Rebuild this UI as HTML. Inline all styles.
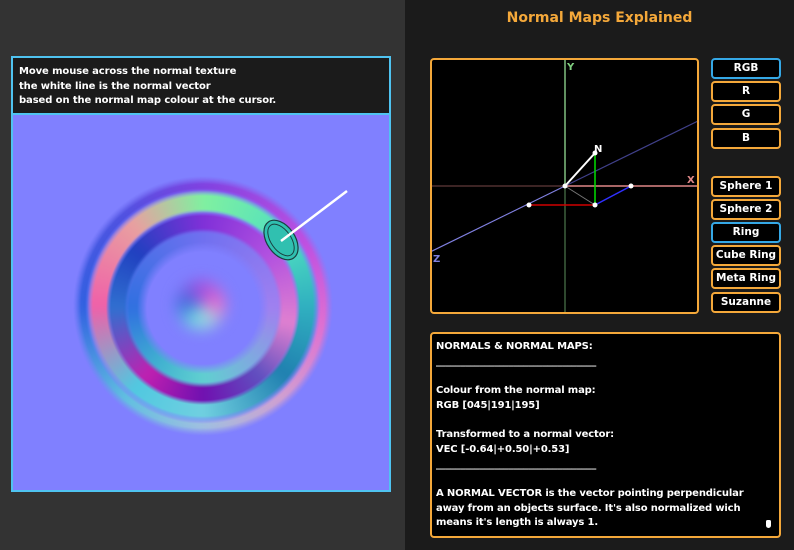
<!DOCTYPE html>
<html><head><meta charset="utf-8"><style>
*{margin:0;padding:0;box-sizing:border-box}
body{width:794px;height:550px;overflow:hidden;background:#1b1b1b;font-family:"DejaVu Sans","Liberation Sans",sans-serif;font-weight:bold;color:#fff;position:relative}
.left{position:absolute;left:0;top:0;width:405px;height:550px;background:#333}
.box{position:absolute;left:11px;top:56px;width:380px;height:436px;border:2px solid #4fc3f0;background:#8080ff;overflow:hidden}
.hdr{position:absolute;left:0;top:0;width:100%;height:57px;background:#1b1b1b;border-bottom:2px solid #4fc3f0;font-size:10px;line-height:14.7px;padding:7px 0 0 6px;z-index:5;letter-spacing:-0.1px}
.ring{position:absolute;border-radius:50%}
.title{position:absolute;left:405px;width:389px;top:10px;text-align:center;color:#f4a83a;font-size:14px}
.btn{position:absolute;left:711px;width:70px;height:21px;border:2px solid #f4a83a;border-radius:4px;background:#000;font-size:10.5px;text-align:center;line-height:17px}
.btn.sel{border-color:#35a8e6}
.info{position:absolute;left:430px;top:332px;width:351px;height:206px;border:2px solid #f4a83a;border-radius:4px;background:#000;font-size:10px;line-height:14.7px;padding:6px 0 0 4px;white-space:pre;letter-spacing:-0.15px}
</style></head><body>
<div class="left"></div>
<div class="box">
<div class="hdr">Move mouse across the normal texture<br>the white line is the normal vector<br>based on the normal map colour at the cursor.</div>
<div class="ring" style="left:60px;top:118px;width:260px;height:260px;filter:blur(5px);background:conic-gradient(from 0deg,#8040e0,#c050e0 60deg,#e070d0 100deg,#d0a0d0 140deg,#a0c0e0 180deg,#60c0e0 220deg,#3060e0 270deg,#5050e0 320deg,#8040e0);-webkit-mask:radial-gradient(circle,transparent 112px,#000 118px,#000 122px,transparent 130px);mask:radial-gradient(circle,transparent 112px,#000 118px,#000 122px,transparent 130px)"></div>
<div class="ring" style="left:64px;top:122px;width:252px;height:252px;filter:blur(4px);background:conic-gradient(from 0deg,#80f0a0,#50e0c0 50deg,#30b0c0 90deg,#2080b0 130deg,#70d0e0 180deg,#50c8e0 220deg,#f060a8 270deg,#e8a0a0 320deg,#80f0a0);-webkit-mask:radial-gradient(circle,transparent 92px,#000 97px,#000 110px,transparent 116px);mask:radial-gradient(circle,transparent 92px,#000 97px,#000 110px,transparent 116px)"></div>
<div class="ring" style="left:80px;top:140px;width:220px;height:220px;filter:blur(4px);background:conic-gradient(from 0deg,#8030d8,#b050e0 50deg,#e080d0 100deg,#6050c0 140deg,#7010b0 180deg,#c020b0 220deg,#3070d0 270deg,#2040c0 310deg,#8030d8);-webkit-mask:radial-gradient(circle,transparent 72px,#000 78px,#000 92px,transparent 97px);mask:radial-gradient(circle,transparent 72px,#000 78px,#000 92px,transparent 97px)"></div>
<div class="ring" style="left:100px;top:160px;width:180px;height:180px;filter:blur(5px);background:conic-gradient(from 0deg,#7070f0,#a080f0 90deg,#60d0d0 180deg,#40b0d0 220deg,#3070e0 270deg,#7070f0);-webkit-mask:radial-gradient(circle,transparent 56px,#000 66px,#000 74px,transparent 80px);mask:radial-gradient(circle,transparent 56px,#000 66px,#000 74px,transparent 80px)"></div>
<div class="ring" style="left:163px;top:222px;width:50px;height:50px;background:conic-gradient(#a050e0,#e070d0 90deg,#a0d0e0 150deg,#70d0e0 210deg,#4070e0 270deg,#a050e0);filter:blur(7px)"></div>
<svg width="380" height="436" style="position:absolute;left:0;top:0;z-index:3">
<ellipse cx="268" cy="182" rx="14" ry="22" transform="rotate(-35 268 182)" fill="#30c0b0" stroke="#1a4040" stroke-width="1.2"/>
<ellipse cx="268" cy="182" rx="10" ry="18" transform="rotate(-35 268 182)" fill="none" stroke="#1a4040" stroke-width="1"/>
<line x1="268" y1="183" x2="334" y2="133" stroke="#fff" stroke-width="2.5"/>
</svg>
</div>
<div class="title">Normal Maps Explained</div>
<div style="position:absolute;left:430px;top:58px;width:269px;height:256px;border:2px solid #f4a83a;border-radius:4px;background:#000;overflow:hidden">
<svg width="269" height="256" style="position:absolute;left:-2px;top:-2px">
<g transform="translate(-430,-58)">
<line x1="430" y1="186" x2="565" y2="186" stroke="#503030" stroke-width="1.5"/>
<line x1="565" y1="186" x2="698" y2="186" stroke="#e08888" stroke-width="1.5"/>
<line x1="565" y1="58" x2="565" y2="186" stroke="#80c080" stroke-width="1.5"/>
<line x1="565" y1="186" x2="565" y2="313" stroke="#3e603e" stroke-width="1.5"/>
<line x1="430" y1="252" x2="565" y2="186" stroke="#8080e0" stroke-width="1.2"/>
<line x1="565" y1="186" x2="698" y2="121" stroke="#40408a" stroke-width="1.2"/>
<line x1="565" y1="186" x2="595" y2="205" stroke="#777" stroke-width="1"/>
<line x1="529" y1="205" x2="595" y2="205" stroke="#d00000" stroke-width="1.5"/>
<line x1="595" y1="205" x2="631" y2="186" stroke="#3030ff" stroke-width="1.5"/>
<line x1="595" y1="153" x2="595" y2="205" stroke="#00e000" stroke-width="1.5"/>
<line x1="565" y1="186" x2="595" y2="153" stroke="#fff" stroke-width="2"/>
<g fill="#fff"><circle cx="565" cy="186" r="2.5"/><circle cx="529" cy="205" r="2.5"/><circle cx="595" cy="205" r="2.5"/><circle cx="631" cy="186" r="2.5"/><circle cx="595" cy="153" r="2.5"/></g>
<g font-family="DejaVu Sans,sans-serif" font-weight="bold" font-size="10">
<text x="567" y="70" fill="#80d080">Y</text>
<text x="687" y="183" fill="#e08888">X</text>
<text x="433" y="262" fill="#8080e0">Z</text>
<text x="594" y="152" fill="#fff">N</text></g>
</g></svg></div>
<div class="btn sel" style="top:58px">RGB</div>
<div class="btn" style="top:81px">R</div>
<div class="btn" style="top:104px">G</div>
<div class="btn" style="top:128px">B</div>
<div class="btn" style="top:176px">Sphere 1</div>
<div class="btn" style="top:199px">Sphere 2</div>
<div class="btn sel" style="top:222px">Ring</div>
<div class="btn" style="top:245px">Cube Ring</div>
<div class="btn" style="top:268px">Meta Ring</div>
<div class="btn" style="top:292px">Suzanne</div>
<div class="info">NORMALS &amp; NORMAL MAPS:
_________________________________

Colour from the normal map:
RGB [045|191|195]

Transformed to a normal vector:
VEC [-0.64|+0.50|+0.53]
_________________________________

A NORMAL VECTOR is the vector pointing perpendicular
away from an objects surface. It's also normalized wich
means it's length is always 1.</div>
<div style="position:absolute;left:766px;top:520px;width:5px;height:8px;background:#fff;border-radius:2px 2px 3px 3px"></div>
</body></html>
